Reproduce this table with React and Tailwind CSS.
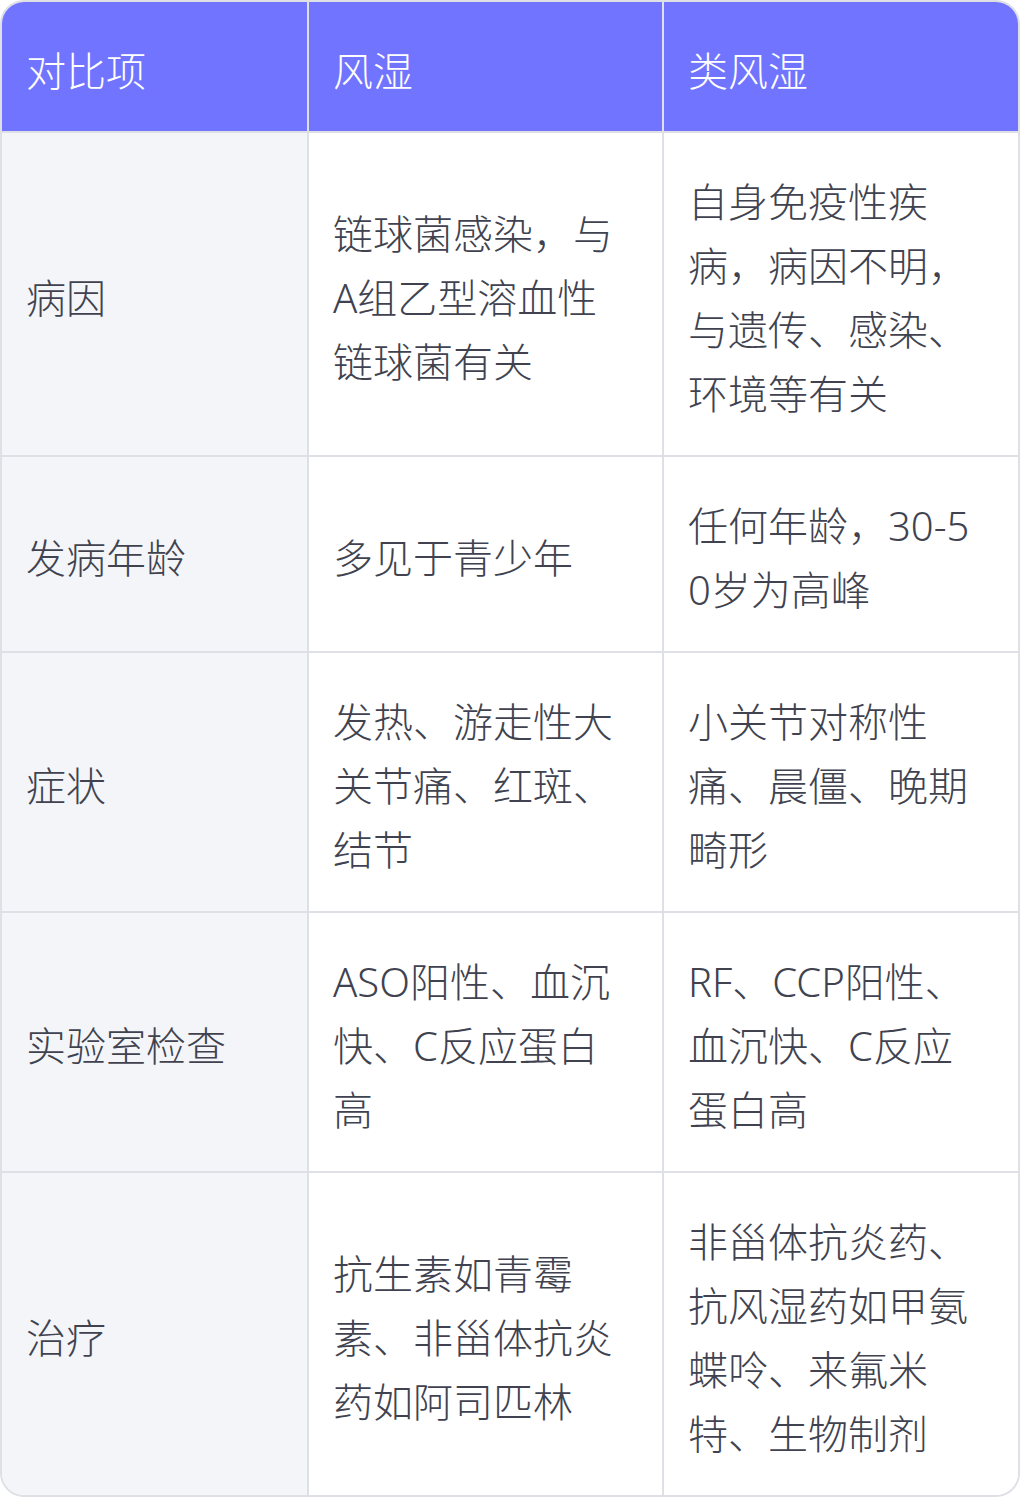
import React from "react";

const rows = [
  ["病因", "链球菌感染，与A组乙型溶血性链球菌有关", "自身免疫性疾病，病因不明，与遗传、感染、环境等有关"],
  ["发病年龄", "多见于青少年", "任何年龄，30-50岁为高峰"],
  ["症状", "发热、游走性大关节痛、红斑、结节", "小关节对称性痛、晨僵、晚期畸形"],
  ["实验室检查", "ASO阳性、血沉快、C反应蛋白高", "RF、CCP阳性、血沉快、C反应蛋白高"],
  ["治疗", "抗生素如青霉素、非甾体抗炎药如阿司匹林", "非甾体抗炎药、抗风湿药如甲氨蝶呤、来氟米特、生物制剂"],
];

export default function App() {
  return (
    <div className="w-[1020px] bg-white">
      <div
        className="w-[1020px] overflow-hidden rounded-[24px] border-2 border-[#dfe0e6] text-[40px] font-light leading-[64px]"
        style={{ fontFamily: '"Noto Sans", "Noto Sans CJK SC", sans-serif' }}
      >
        <div className="flex h-[131px] border-b-2 border-[#dfe0e6] bg-[#7074ff] text-white">
          <div className="flex w-[307px] items-center border-r-2 border-[#dfe0e6] px-[24px] pt-[8px]">对比项</div>
          <div className="flex w-[355px] items-center border-r-2 border-[#dfe0e6] px-[24px] pt-[8px]">风湿</div>
          <div className="flex flex-1 items-center px-[24px] pt-[8px]">类风湿</div>
        </div>
        {rows.map((r, i) => (
          <div
            key={i}
            className={
              "flex text-[#40434f] " + (i < rows.length - 1 ? "border-b-2 border-[#dfe0e6]" : "")
            }
          >
            <div className="flex w-[307px] items-center border-r-2 border-[#dfe0e6] bg-[#f4f5f9] px-[24px] pt-[37px] pb-[29px] break-all">
              {r[0]}
            </div>
            <div className="flex w-[355px] items-center border-r-2 border-[#dfe0e6] bg-white pl-[24px] pr-[28px] pt-[37px] pb-[29px] break-all">
              <span>{r[1]}</span>
            </div>
            <div className="flex flex-1 items-center bg-white pl-[24px] pr-[28px] pt-[37px] pb-[29px] break-all">
              <span>{r[2]}</span>
            </div>
          </div>
        ))}
      </div>
    </div>
  );
}
